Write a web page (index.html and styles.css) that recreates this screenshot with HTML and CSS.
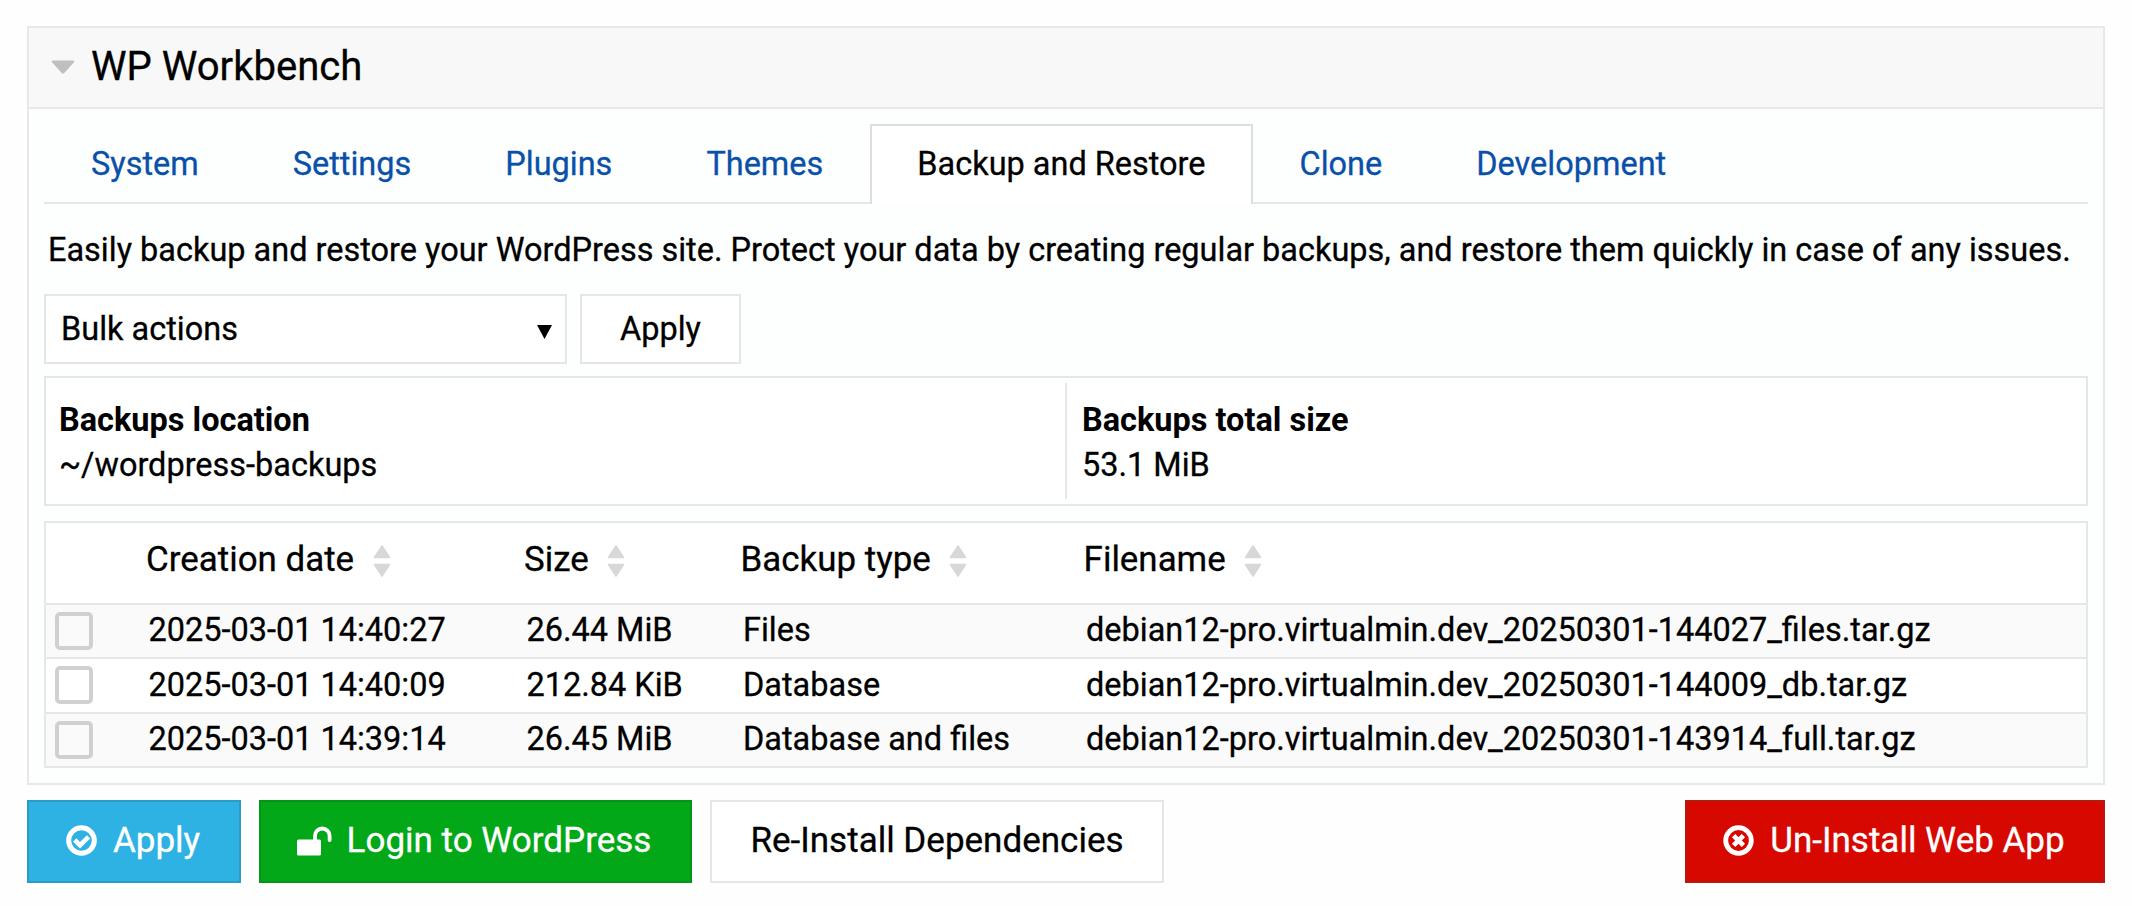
FILE: index.html
```html
<!DOCTYPE html>
<html lang="en">
<head>
<meta charset="utf-8">
<title>WP Workbench</title>
<link rel="stylesheet" href="styles.css">
</head>
<body>
<section class="panel">
  <header class="panel-head">
    <svg class="caret" width="24" height="14" viewBox="0 0 24 14"><path d="M2 0.5h20q2 0 1 1.8L13.3 13q-1.3 1.4-2.6 0L1 2.3Q0 .5 2 .5z"/></svg>
    <h1 class="title">WP Workbench</h1>
  </header>
  <div class="panel-body">
    <nav class="tabs">
      <a class="tab">System</a>
      <a class="tab">Settings</a>
      <a class="tab">Plugins</a>
      <a class="tab">Themes</a>
      <a class="tab active">Backup and Restore</a>
      <a class="tab">Clone</a>
      <a class="tab">Development</a>
    </nav>
    <p class="desc">Easily backup and restore your WordPress site. Protect your data by creating regular backups, and restore them quickly in case of any issues.</p>
    <div class="bulk">
      <div class="select"><span>Bulk actions</span><svg width="15" height="14" viewBox="0 0 15 14"><path d="M0 0h15L7.5 14z"/></svg></div>
      <button class="btn-small">Apply</button>
    </div>
    <div class="info">
      <div class="info-cell"><b>Backups location</b><span>~/wordpress-backups</span></div>
      <div class="info-cell"><b>Backups total size</b><span>53.1 MiB</span></div>
    </div>
    <div class="table">
      <div class="row head">
        <span></span>
        <span class="th">Creation date<svg class="sort" width="18" height="34" viewBox="0 0 18 34"><path d="M9 2l7.5 11.5h-15zM1.5 20.5h15L9 32z"/></svg></span>
        <span class="th">Size<svg class="sort" width="18" height="34" viewBox="0 0 18 34"><path d="M9 2l7.5 11.5h-15zM1.5 20.5h15L9 32z"/></svg></span>
        <span class="th">Backup type<svg class="sort" width="18" height="34" viewBox="0 0 18 34"><path d="M9 2l7.5 11.5h-15zM1.5 20.5h15L9 32z"/></svg></span>
        <span class="th">Filename<svg class="sort" width="18" height="34" viewBox="0 0 18 34"><path d="M9 2l7.5 11.5h-15zM1.5 20.5h15L9 32z"/></svg></span>
      </div>
      <div class="row odd"><i class="check"></i><span>2025-03-01 14:40:27</span><span>26.44 MiB</span><span>Files</span><span>debian12-pro.virtualmin.dev_20250301-144027_files.tar.gz</span></div>
      <div class="row mid"><i class="check"></i><span>2025-03-01 14:40:09</span><span>212.84 KiB</span><span>Database</span><span>debian12-pro.virtualmin.dev_20250301-144009_db.tar.gz</span></div>
      <div class="row odd"><i class="check"></i><span>2025-03-01 14:39:14</span><span>26.45 MiB</span><span>Database and files</span><span>debian12-pro.virtualmin.dev_20250301-143914_full.tar.gz</span></div>
    </div>
  </div>
</section>
<footer class="actions">
  <button class="btn apply"><svg width="31" height="31" viewBox="0 0 31 31"><circle cx="15.5" cy="15.5" r="12.8" fill="none" stroke="#fff" stroke-width="5"/><path d="M8.7 15l5.3 5.2 8.6-8.4" fill="none" stroke="#fff" stroke-width="4.6"/></svg><span>Apply</span></button>
  <button class="btn login"><svg width="35" height="30" viewBox="0 0 35 30"><rect x="0" y="13.5" width="24" height="16" rx="1.6" fill="#fff"/><path d="M18 14V9.8a7.3 7.3 0 0 1 14.6 0V14" fill="none" stroke="#fff" stroke-width="3.8" stroke-linecap="round"/></svg><span>Login to WordPress</span></button>
  <button class="btn plain"><span>Re-Install Dependencies</span></button>
  <button class="btn remove"><svg width="31" height="31" viewBox="0 0 31 31"><circle cx="15.5" cy="15.5" r="12.8" fill="none" stroke="#fff" stroke-width="4.8"/><path d="M10.6 10.6l9.8 9.8m0-9.8l-9.8 9.8" fill="none" stroke="#fff" stroke-width="4.8"/></svg><span>Un-Install Web App</span></button>
</footer>
</body>
</html>
```
FILE: styles.css
```css
* { box-sizing: border-box; }
body {
  margin: 0;
  padding: 26px 27px 0;
  background: #fefefe;
  color: #000;
  font-family: Roboto, "Liberation Sans", sans-serif;
  font-size: 32.48px;
  -webkit-text-stroke: 0.3px;
}
button { font: inherit; color: inherit; padding: 0; }
.panel { border: 2px solid #e7e9e9; background: #fdfefe; }
.panel-head {
  display: flex;
  align-items: center;
  height: 81px;
  padding: 0 22px 2px;
  background: #f8f8f8;
  border-bottom: 2px solid #e7e9e9;
}
.caret { fill: #bfbfbf; }
.title { margin: 0 0 0 16px; font-size: 40.1px; font-weight: 400; }
.panel-body { padding: 15px 15px; height: 674px; }
.tabs { display: flex; height: 80px; border-bottom: 2px solid #e4e7e7; }
.tab {
  height: 80px;
  padding: 0 45px;
  border: 2px solid transparent;
  border-bottom: 0;
  line-height: 76px;
  color: #0951a8;
  white-space: nowrap;
}
.tab.active { color: #000; background: #fff; border-color: #dddfdf; }
.desc { margin: 23px 0 0; padding-left: 4px; height: 46px; line-height: 46px; white-space: nowrap; }
.bulk { display: flex; gap: 13px; margin-top: 21px; height: 70px; }
.select {
  display: flex;
  align-items: center;
  justify-content: space-between;
  width: 523px;
  padding: 0 13px 0 15px;
  border: 2px solid #e4e7e7;
  background: #fff;
}
.select svg { margin-top: 5px; }
.btn-small { width: 161px; border: 2px solid #e4e7e7; background: #fff; }
.info {
  display: grid;
  grid-template-columns: 1021px 1fr;
  height: 130px;
  margin-top: 12px;
  padding: 5px 0;
  border: 2px solid #e4e7e7;
  background: #fff;
}
.info-cell { display: flex; flex-direction: column; padding: 15px 0 0 15px; line-height: 45px; }
.info-cell:first-child { border-right: 2px solid #e4e7e7; padding-left: 13px; }
.info-cell b { font-weight: 700; -webkit-text-stroke: 0; }
.table { margin-top: 15px; border: 2px solid #e6e7e7; background: #fff; }
.row {
  display: grid;
  grid-template-columns: 102.5px 378px 216.5px 343px 1fr;
  align-items: center;
  height: 54px;
  border-bottom: 2px solid #e6e7e7;
  white-space: nowrap;
  line-height: 49px;
}
.row span { padding-bottom: 2px; }
.row:last-child { height: 52px; border-bottom: 0; }
.row.mid { height: 55px; }
.row.mid span { padding-bottom: 0; }
.row.odd { background: #fafafa; }
.row.head { height: 82px; padding-bottom: 6px; font-size: 34.9px; }
.th { display: flex; align-items: center; margin-left: -2.4px; }
.sort { margin: 3px 0 0 18.5px; fill: #d8d8d8; stroke: #d8d8d8; stroke-width: 1.6; stroke-linejoin: round; }
.check {
  width: 38px;
  height: 38px;
  margin: -1px 0 0 9px;
  border: 4px solid #cfd0d0;
  border-radius: 5px;
}
.actions { display: flex; margin-top: 15px; height: 83px; }
.btn {
  display: flex;
  align-items: center;
  justify-content: center;
  padding-bottom: 2px;
  border: 2px solid;
  color: #fff;
  font-size: 35px;
  white-space: nowrap;
}
.apply { width: 214px; padding-right: 2px; background: #2eb2e4; border-color: #2b9cc8; gap: 16px; }
.login { width: 433px; padding-right: 3px; margin-left: 18px; background: #02a817; border-color: #059416; gap: 15px; }
.plain { width: 454px; margin-left: 18px; background: #fff; border-color: #e6e6e6; color: #000; }
.remove { width: 420px; padding-right: 2px; margin-left: auto; background: #d60800; border-color: #b51a10; gap: 16px; }
```
